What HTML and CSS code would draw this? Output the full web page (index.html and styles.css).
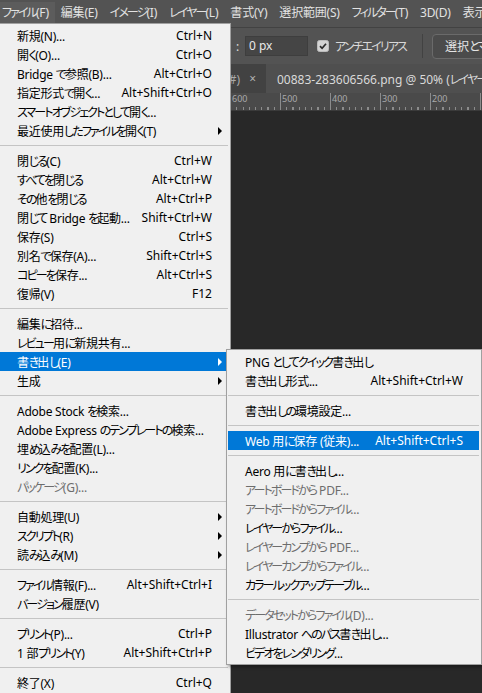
FILE: index.html
```html
<!DOCTYPE html>
<html lang="ja">
<head>
<meta charset="utf-8">
<title>Photoshop ファイル メニュー</title>
<link rel="stylesheet" href="styles.css">
</head>
<body>
<div class="app">
  <div class="menubar">
    <span class="mb-item open">ファイル(F)</span>
    <span class="mb-item">編集(E)</span>
    <span class="mb-item">イメージ(I)</span>
    <span class="mb-item">レイヤー(L)</span>
    <span class="mb-item">書式(Y)</span>
    <span class="mb-item">選択範囲(S)</span>
    <span class="mb-item">フィルター(T)</span>
    <span class="mb-item">3D(D)</span>
    <span class="mb-item">表示</span>
  </div>
  <div class="optbar">
    <span class="opt-colon">:</span>
    <span class="opt-input">0 px</span>
    <span class="opt-check"><svg viewBox="0 0 12 12" width="12" height="12"><rect x="0.5" y="0.5" width="11" height="11" rx="2" fill="#d4d4d4" stroke="#bcbcbc"/><path d="M3 6.2 L5.1 8.3 L9 3.8" fill="none" stroke="#2b2b2b" stroke-width="1.7"/></svg></span>
    <span class="opt-label jp">アンチエイリアス</span>
    <span class="opt-divider"></span>
    <span class="opt-button jp">選択とマスク...</span>
  </div>
  <div class="work">
    <div class="toolbar"></div>
    <div class="doc">
      <div class="tabs">
        <div class="tab inactive"><span class="tab-name">無題-1 @ 66.7% (RGB/8#)</span><span class="tab-close">×</span></div>
        <div class="tab active"><span class="tab-name jp">00883-283606566.png @ 50% (レイヤー 1, RGB/8#)</span></div>
      </div>
      <div class="ruler">
        <span class="rcell">600</span>
        <span class="rcell">500</span>
        <span class="rcell">400</span>
        <span class="rcell">300</span>
        <span class="rcell">200</span>
        <span class="rcell">100</span>
      </div>
      <div class="canvas"></div>
    </div>
  </div>

  <nav class="menu main-menu">
    <div class="mi"><span class="lb">新規(N)...</span><span class="sc">Ctrl+N</span></div>
    <div class="mi"><span class="lb">開く(O)...</span><span class="sc">Ctrl+O</span></div>
    <div class="mi"><span class="lb">Bridge で参照(B)...</span><span class="sc">Alt+Ctrl+O</span></div>
    <div class="mi"><span class="lb">指定形式で開く...</span><span class="sc">Alt+Shift+Ctrl+O</span></div>
    <div class="mi"><span class="lb">スマートオブジェクトとして開く...</span></div>
    <div class="mi"><span class="lb">最近使用したファイルを開く(T)</span><span class="sc"></span><span class="arr"></span></div>
    <div class="sep"></div>
    <div class="mi"><span class="lb">閉じる(C)</span><span class="sc">Ctrl+W</span></div>
    <div class="mi"><span class="lb">すべてを閉じる</span><span class="sc">Alt+Ctrl+W</span></div>
    <div class="mi"><span class="lb">その他を閉じる</span><span class="sc">Alt+Ctrl+P</span></div>
    <div class="mi"><span class="lb">閉じて Bridge を起動...</span><span class="sc">Shift+Ctrl+W</span></div>
    <div class="mi"><span class="lb">保存(S)</span><span class="sc">Ctrl+S</span></div>
    <div class="mi"><span class="lb">別名で保存(A)...</span><span class="sc">Shift+Ctrl+S</span></div>
    <div class="mi"><span class="lb">コピーを保存...</span><span class="sc">Alt+Ctrl+S</span></div>
    <div class="mi"><span class="lb">復帰(V)</span><span class="sc">F12</span></div>
    <div class="sep"></div>
    <div class="mi"><span class="lb">編集に招待...</span></div>
    <div class="mi"><span class="lb">レビュー用に新規共有...</span></div>
    <div class="mi hl"><span class="lb">書き出し(E)</span><span class="sc"></span><span class="arr"></span></div>
    <div class="mi"><span class="lb">生成</span><span class="sc"></span><span class="arr"></span></div>
    <div class="sep"></div>
    <div class="mi"><span class="lb">Adobe Stock を検索...</span></div>
    <div class="mi"><span class="lb">Adobe Express のテンプレートの検索...</span></div>
    <div class="mi"><span class="lb">埋め込みを配置(L)...</span></div>
    <div class="mi"><span class="lb">リンクを配置(K)...</span></div>
    <div class="mi dis"><span class="lb">パッケージ(G)...</span></div>
    <div class="sep"></div>
    <div class="mi"><span class="lb">自動処理(U)</span><span class="sc"></span><span class="arr"></span></div>
    <div class="mi"><span class="lb">スクリプト(R)</span><span class="sc"></span><span class="arr"></span></div>
    <div class="mi"><span class="lb">読み込み(M)</span><span class="sc"></span><span class="arr"></span></div>
    <div class="sep"></div>
    <div class="mi"><span class="lb">ファイル情報(F)...</span><span class="sc">Alt+Shift+Ctrl+I</span></div>
    <div class="mi"><span class="lb">バージョン履歴(V)</span></div>
    <div class="sep"></div>
    <div class="mi"><span class="lb">プリント(P)...</span><span class="sc">Ctrl+P</span></div>
    <div class="mi"><span class="lb">1 部プリント(Y)</span><span class="sc">Alt+Shift+Ctrl+P</span></div>
    <div class="sep"></div>
    <div class="mi"><span class="lb">終了(X)</span><span class="sc">Ctrl+Q</span></div>
  </nav>

  <nav class="menu sub-menu">
    <div class="mi"><span class="lb">PNG としてクイック書き出し</span></div>
    <div class="mi"><span class="lb">書き出し形式...</span><span class="sc">Alt+Shift+Ctrl+W</span></div>
    <div class="sep"></div>
    <div class="mi"><span class="lb">書き出しの環境設定...</span></div>
    <div class="sep"></div>
    <div class="mi hl"><span class="lb">Web 用に保存 (従来)...</span><span class="sc">Alt+Shift+Ctrl+S</span></div>
    <div class="sep"></div>
    <div class="mi"><span class="lb">Aero 用に書き出し...</span></div>
    <div class="mi dis"><span class="lb">アートボードから PDF...</span></div>
    <div class="mi dis"><span class="lb">アートボードからファイル...</span></div>
    <div class="mi"><span class="lb">レイヤーからファイル...</span></div>
    <div class="mi dis"><span class="lb">レイヤーカンプから PDF...</span></div>
    <div class="mi dis"><span class="lb">レイヤーカンプからファイル...</span></div>
    <div class="mi"><span class="lb">カラールックアップテーブル...</span></div>
    <div class="sep"></div>
    <div class="mi dis"><span class="lb">データセットからファイル(D)...</span></div>
    <div class="mi"><span class="lb">Illustrator へのパス書き出し...</span></div>
    <div class="mi"><span class="lb">ビデオをレンダリング...</span></div>
  </nav>
</div>
<script src="kana.js"></script>
</body>
</html>
```

FILE: kana.js
```js
// Wrap runs of kana in a span so they can be set as tightly as the
// Windows UI font in the reference.
document.querySelectorAll('.lb, .mb-item, .jp').forEach(function (el) {
  el.innerHTML = el.textContent.replace(/([\u3041-\u30ff]+)/g, '<span class="kn">$1</span>');
});
```

FILE: styles.css
```css
* { box-sizing: border-box; }

html, body {
  margin: 0;
  padding: 0;
  width: 482px;
  height: 693px;
  overflow: hidden;
  background: #282828;
}

body {
  font-family: "Noto Sans", "Noto Sans CJK JP", sans-serif;
  font-size: 12px;
  font-feature-settings: "palt";
}

.kn {
  letter-spacing: -1.9px;
}

.app {
  position: relative;
  width: 482px;
  height: 693px;
  display: flex;
  flex-direction: column;
  overflow: hidden;
}

/* ---------- menu bar ---------- */
.menubar {
  height: 28px;
  flex: none;
  display: flex;
  align-items: center;
  background: #535353;
  border-bottom: 1px solid #424242;
  color: #e2e2e2;
  margin-left: -4px;
  white-space: nowrap;
  padding-bottom: 2px;
}

.mb-item {
  flex: none;
  padding: 0 6px;
  line-height: 22px;
  letter-spacing: -0.2px;
}

.mb-item.open {
  background: #5c5c5c;
}

/* ---------- options bar ---------- */
.optbar {
  height: 36px;
  flex: none;
  display: flex;
  align-items: center;
  background: #535353;
  color: #dcdcdc;
  padding-left: 236px;
  white-space: nowrap;
}

.optbar > * {
  flex: none;
}

.opt-colon {
  width: 9px;
}

.opt-input {
  width: 63px;
  height: 20px;
  line-height: 18px;
  padding-left: 3px;
  background: #454545;
  border: 1px solid #3e3e3e;
  color: #e8e8e8;
}

.opt-check {
  display: flex;
  margin-left: 9px;
}

.opt-label {
  margin-left: 6px;
  color: #d8d8d8;
}

.opt-divider {
  width: 1px;
  height: 24px;
  background: #424242;
  margin-left: 16px;
}

.opt-button {
  margin-left: 9px;
  height: 25px;
  line-height: 23px;
  padding: 0 12px;
  border: 1px solid #6a6a6a;
  border-radius: 4px;
  background: #4b4b4b;
  color: #e4e4e4;
}

/* ---------- workspace ---------- */
.work {
  flex: 1;
  display: flex;
  min-height: 0;
}

.toolbar {
  width: 230px;
  flex: none;
  background: #535353;
}

.doc {
  flex: 1;
  display: flex;
  flex-direction: column;
  min-width: 0;
}

.tabs {
  height: 29px;
  flex: none;
  display: flex;
  background: #3a3a3a;
  color: #cfcfcf;
  white-space: nowrap;
}

.tab {
  display: flex;
  align-items: center;
  overflow: hidden;
}

.tab.inactive {
  width: 36px;
  flex: none;
  justify-content: flex-end;
  background: #424242;
  padding-right: 10px;
  color: #a9a9a9;
}

.tab-name {
  flex: none;
}

.tab-close {
  flex: none;
  margin-left: 9px;
  color: #b0b0b0;
}

.tab.active {
  flex: 1;
  background: #4f4f4f;
  padding-left: 11px;
  color: #d9d9d9;
}

.ruler {
  height: 18px;
  flex: none;
  display: flex;
  background-color: #4a4a4a;
  background-image: repeating-linear-gradient(to right, #8c8c8c 0 1px, transparent 1px 6.25px);
  background-size: 100% 3px;
  background-repeat: no-repeat;
  background-position: 0 100%;
  border-bottom: 1px solid #3a3a3a;
  color: #a9a9a9;
  font-size: 9px;
  overflow: hidden;
}

.rcell {
  width: 50px;
  flex: none;
  border-left: 1px solid #8c8c8c;
  padding-left: 1px;
  line-height: 11px;
}

.canvas {
  flex: 1;
  background: #282828;
}

/* ---------- dropdown menus ---------- */
.menu {
  position: absolute;
  background: #f0f0f0;
  border: 1px solid #a0a0a0;
  color: #000;
  white-space: nowrap;
}

.main-menu {
  left: -3px;
  top: 23px;
  width: 234px;
  height: 680px;
  padding: 2px;
}

.sub-menu {
  left: 226px;
  top: 349px;
  width: 256px;
  padding: 2px 2px 2px 1px;
  box-shadow: 2px 2px 3px rgba(0, 0, 0, 0.35);
}

.mi {
  height: 19px;
  display: grid;
  grid-template-columns: 1fr auto 16px;
  align-items: center;
  padding-left: 17px;
}

.mi .lb {
  letter-spacing: -0.25px;
}

.mi .sc {
  text-align: right;
}

.mi .arr {
  width: 0;
  height: 0;
  margin-left: 6px;
  border-left: 4px solid #000;
  border-top: 4px solid transparent;
  border-bottom: 4px solid transparent;
}

.mi.hl {
  background: #0078d7;
  color: #fff;
}

.mi.hl .arr {
  border-left-color: #fff;
}

.mi.dis {
  color: #6d6d6d;
}

.sep {
  height: 1px;
  margin: 5px 0;
  background: #c4c4c4;
}
```
